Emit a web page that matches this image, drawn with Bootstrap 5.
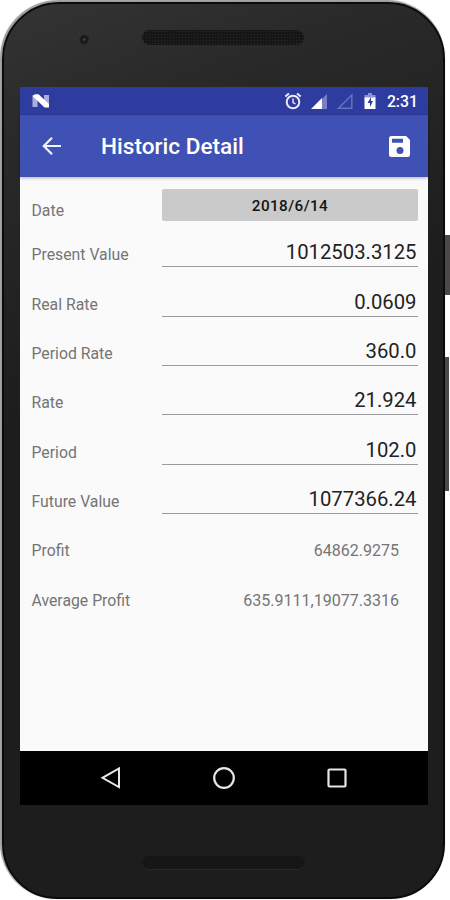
<!DOCTYPE html>
<html lang="en">
<head>
<meta charset="utf-8">
<meta name="viewport" content="width=device-width, initial-scale=1">
<title>Historic Detail</title>
<link href="https://cdn.jsdelivr.net/npm/bootstrap@5.3.0/dist/css/bootstrap.min.css" rel="stylesheet">
<style>
body { font-family: Roboto, "Liberation Sans", sans-serif; width: 450px; height: 900px; overflow: hidden; background: #fff; }
.phone { width: 443px; height: 897px; margin: 2px 0 0 2px; padding: 0 15px 0 16px; border: 2px solid #0b0b0b; border-radius: 57px 57px 55px 55px;
  background: linear-gradient(160deg, #343434 0, #292929 14%, #1d1d1d 40%, #1d1d1d 100%);
  box-shadow: -1px -1px 1px 1px #9b9b9b; }
.bezel-top { height: 83px; padding-top: 26px; }
.lens { width: 12px; height: 12px; margin: 3px 53px 0 57px; border-radius: 50%; background: radial-gradient(circle at 60% 55%, #555 0, #151515 22%, #202020 45%, #333 60%, #2c2c2c 100%); }
.grille { width: 162px; height: 15px; border-radius: 8px; background-color: #161616; background-image: radial-gradient(#2b2b2b 35%, transparent 40%); background-size: 3px 3px; }
.grille-low { width: 163px; height: 14px; border-radius: 7px; margin: 51px 0 0 122px; background: #161616; border-bottom: 1px solid #272727; }
.screen { width: 408px; height: 718px; background: #fafafa; }
.statusbar { height: 28px; background: #2f3c9f; padding: 0 10px 0 12px; }
.status-icons { gap: 9px; margin-right: 8px; }
.clock { font-size: 15.8px; font-weight: 500; line-height: 28px; padding-top: 1px; }
.appbar { height: 62px; background: #3f51b5; box-shadow: 0 1px 3px rgba(0,0,0,.3); padding: 0 17px 0 19px; }
.app-title { font-size: 22.6px; font-weight: 500; line-height: 62px; margin-left: 36px; padding-top: 2px; }
.entries { padding: 0 10px 0 11.5px; color: #757575; font-size: 15.8px; }
.entry { height: 49.35px; }
.entry-date { height: 53px; }
.entry-name { width: 130.5px; line-height: 20px; padding-top: 1px; }
.date-btn { height: 32.5px; border-radius: 2px; background: #cacaca; color: #141414; font-size: 15.3px; font-weight: 500; letter-spacing: .4px; line-height: 34px; padding: 0; border: 0; margin-top: 11.5px; }
.entry-name.date-name { padding-top: 24px; }
.amount { height: 37px; margin-bottom: 12px; border: 0; border-bottom: 1px solid #9a9a9a; color: #222; font-size: 20.3px; line-height: 45px; padding-right: 1.5px; }
.result { padding: 1px 19px 0 0; font-size: 16.05px; }
.navbar-keys { height: 54px; background: #000; padding: 0 79px 0 79px; }
.side-key { position: absolute; left: 445px; background: #4a4848; }
.key-power { top: 235px; width: 5px; height: 60px; }
.key-volume { top: 357px; width: 4px; height: 134px; }
</style>
<script src="https://cdn.jsdelivr.net/npm/bootstrap@5.3.0/dist/js/bootstrap.bundle.min.js"></script>
</head>
<body class="position-relative">
<div class="side-key key-power"></div>
<div class="side-key key-volume"></div>
<div class="phone">
  <div class="bezel-top d-flex align-items-start">
    <div class="lens"></div>
    <div class="grille"></div>
  </div>
  <main class="screen d-flex flex-column">
    <div class="statusbar d-flex align-items-center text-white">
      <svg width="18" height="14" viewBox="0 0 18 14"><path d="M.5 1v12h5V4zM17 13V1h-5v8z" fill="#a9afdc"/><path d="M.5 2 3 .3h3.500L17 10v3.500h-4.500z" fill="#fff"/></svg>
      <div class="status-icons d-flex align-items-center ms-auto">
        <svg width="18" height="18" viewBox="0 0 18 18" fill="none" stroke="#e9ebf8" stroke-width="2"><circle cx="9" cy="10" r="6.300"/><path d="M1.300 4.500 5 1.500M16.700 4.500 13 1.500"/><path d="M9 6.500v4l2.500 1.500" stroke-width="1.400"/></svg>
        <svg width="17" height="17" viewBox="1 0 17 17"><path d="M2 16 17 1v15z" fill="#7782c4"/><path d="M1 16 12 5v11z" fill="#fff"/></svg>
        <svg width="17" height="17" viewBox="0 0 17 17"><path d="M1.500 15.300 14.800 2v13.300z" fill="none" stroke="#6672bd" stroke-width="1.500"/></svg>
        <svg width="16" height="18" viewBox="0 0 16 18"><path d="M1.500 3H5V1h4v2h3.500v4h-11z" fill="#8a93cf"/><path d="M1.500 5.500h11V17h-11z" fill="#fff"/><path d="M8 5 4.500 11H7v4L10 9H8z" fill="#2f3c9f"/></svg>
      </div>
      <span class="clock">2:31</span>
    </div>
    <header class="appbar d-flex align-items-center text-white">
      <svg width="26" height="24" viewBox="0 0 26 24" fill="none" stroke="#f4f5fc" stroke-width="2.200"><path d="M22 12H5M13 3.800 4.800 12l8.200 8.200"/></svg>
      <h1 class="app-title mb-0">Historic Detail</h1>
      <svg class="ms-auto" width="23" height="23" viewBox="0 0 23 23"><path fill-rule="evenodd" fill="#fff" d="M3.500 1H18l4 4v14.500a2.500 2.500 0 0 1-2.500 2.500h-16A2.500 2.500 0 0 1 1 19.500v-16A2.500 2.500 0 0 1 3.500 1zM4 3.800v4h11v-4zM12 12a3.500 3.500 0 1 0 0 7 3.500 3.500 0 0 0 0-7z"/></svg>
    </header>
    <div class="entries flex-grow-1">
      <div class="entry-date d-flex align-items-start">
        <div class="entry-name date-name">Date</div>
        <button type="button" class="date-btn btn flex-grow-1">2018/6/14</button>
      </div>
      <div class="entry d-flex align-items-center"><div class="entry-name">Present Value</div><div class="amount flex-grow-1 text-end">1012503.3125</div></div>
      <div class="entry d-flex align-items-center"><div class="entry-name">Real Rate</div><div class="amount flex-grow-1 text-end">0.0609</div></div>
      <div class="entry d-flex align-items-center"><div class="entry-name">Period Rate</div><div class="amount flex-grow-1 text-end">360.0</div></div>
      <div class="entry d-flex align-items-center"><div class="entry-name">Rate</div><div class="amount flex-grow-1 text-end">21.924</div></div>
      <div class="entry d-flex align-items-center"><div class="entry-name">Period</div><div class="amount flex-grow-1 text-end">102.0</div></div>
      <div class="entry d-flex align-items-center"><div class="entry-name">Future Value</div><div class="amount flex-grow-1 text-end">1077366.24</div></div>
      <div class="entry d-flex align-items-center"><div class="entry-name">Profit</div><div class="result flex-grow-1 text-end">64862.9275</div></div>
      <div class="entry d-flex align-items-center"><div class="entry-name">Average Profit</div><div class="result flex-grow-1 text-end">635.9111,19077.3316</div></div>
    </div>
    <nav class="navbar-keys d-flex align-items-center justify-content-between">
      <svg width="24" height="24" viewBox="0 0 24 24" fill="none" stroke="#e6e6e6" stroke-width="2"><path d="M20 2.500v18.500L3.500 11.800z"/></svg>
      <svg width="24" height="24" viewBox="0 0 24 24" fill="none" stroke="#e6e6e6" stroke-width="2.200"><circle cx="12" cy="12" r="9.800"/></svg>
      <svg width="24" height="24" viewBox="0 0 24 24" fill="none" stroke="#e6e6e6" stroke-width="2.200"><rect x="3.500" y="3.500" width="17" height="17" rx="1"/></svg>
    </nav>
  </main>
  <div class="grille-low"></div>
</div>
</body>
</html>
